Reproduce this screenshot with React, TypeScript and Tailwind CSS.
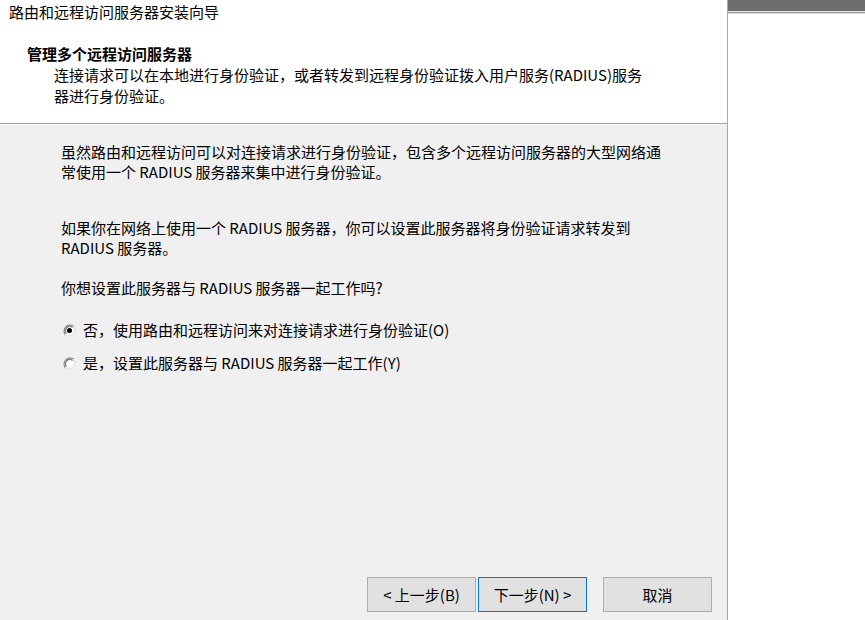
import React from 'react';

const font = { fontFamily: '"Noto Sans CJK SC", "Noto Sans", sans-serif' };

const Radio = ({ checked }: { checked?: boolean }) => (
  <svg width="13" height="13" viewBox="0 0 13 13" className="shrink-0">
    <circle cx="6.5" cy="6.5" r="6" fill="#ffffff" />
    <path d="M2.3 10.7 A6 6 0 0 1 10.7 2.3" fill="none" stroke="#808080" strokeWidth="1.3" />
    <path d="M10.7 2.3 A6 6 0 0 1 2.3 10.7" fill="none" stroke="#dcdcdc" strokeWidth="1.3" />
    <path d="M3.4 9.6 A4.4 4.4 0 0 1 9.6 3.4" fill="none" stroke="#505050" strokeWidth="1" />
    {checked && <circle cx="6.5" cy="6.5" r="2.5" fill="#000000" />}
  </svg>
);

const WizButton = ({ label, primary }: { label: string; primary?: boolean }) => (
  <button
    className={`w-[109px] h-[35px] bg-[#e1e1e1] text-[15px] leading-none text-black border ${
      primary ? 'border-[#0078d7]' : 'border-[#adadad]'
    }`}
  >
    {label}
  </button>
);

const App = () => {
  return (
    <div className="w-[865px] h-[620px] flex bg-white overflow-hidden text-black" style={font}>
      {/* Wizard dialog */}
      <div className="w-[727px] h-full flex flex-col">
        {/* Header */}
        <div className="h-[124px] bg-white border-b border-[#a0a0a0] shrink-0">
          <div className="pl-[9px] pt-[2px] text-[15px] leading-[20px] whitespace-nowrap">路由和远程访问服务器安装向导</div>
          <div className="pl-[27px] mt-[22px] text-[15px] leading-[20px] font-bold whitespace-nowrap">管理多个远程访问服务器</div>
          <div className="pl-[54px] text-[15px] leading-[21px] whitespace-nowrap">
            连接请求可以在本地进行身份验证，或者转发到远程身份验证拨入用户服务(RADIUS)服务
            <br />
            器进行身份验证。
          </div>
        </div>
        <div className="h-px bg-white shrink-0" />

        {/* Body */}
        <div className="flex-1 bg-[#f0f0f0] flex flex-col">
          <div className="pl-[61px] pt-[17px] text-[15px] leading-[20px] whitespace-nowrap">
            <p>
              虽然路由和远程访问可以对连接请求进行身份验证，包含多个远程访问服务器的大型网络通
              <br />
              常使用一个 RADIUS 服务器来集中进行身份验证。
            </p>
            <p className="mt-[36px]">
              如果你在网络上使用一个 RADIUS 服务器，你可以设置此服务器将身份验证请求转发到
              <br />
              RADIUS 服务器。
            </p>
            <p className="mt-[20px]">你想设置此服务器与 RADIUS 服务器一起工作吗?</p>
          </div>

          <div className="pl-[63px] mt-[22px] flex flex-col gap-[13px] text-[15px] leading-[20px]">
            <label className="flex items-center gap-[7px] whitespace-nowrap">
              <Radio checked />
              <span>否，使用路由和远程访问来对连接请求进行身份验证(O)</span>
            </label>
            <label className="flex items-center gap-[7px] whitespace-nowrap">
              <Radio />
              <span>是，设置此服务器与 RADIUS 服务器一起工作(Y)</span>
            </label>
          </div>

          <div className="mt-auto mb-[8px] pr-[15px] flex justify-end">
            <div className="flex gap-[2px]">
              <WizButton label="< 上一步(B)" />
              <WizButton label="下一步(N) >" primary />
            </div>
            <div className="ml-[16px]">
              <WizButton label="取消" />
            </div>
          </div>
        </div>
      </div>

      {/* Right background window */}
      <div className="flex-1 h-full border-l border-[#a8a8a8] bg-white flex flex-col">
        <div className="h-[11px] bg-[#6e6e6e]" />
        <div className="h-px bg-[#e4e4e4]" />
        <div className="h-px bg-[#9c9c9c]" />
        <div className="h-px bg-[#dcdcdc]" />
      </div>
    </div>
  );
};

export default App;
